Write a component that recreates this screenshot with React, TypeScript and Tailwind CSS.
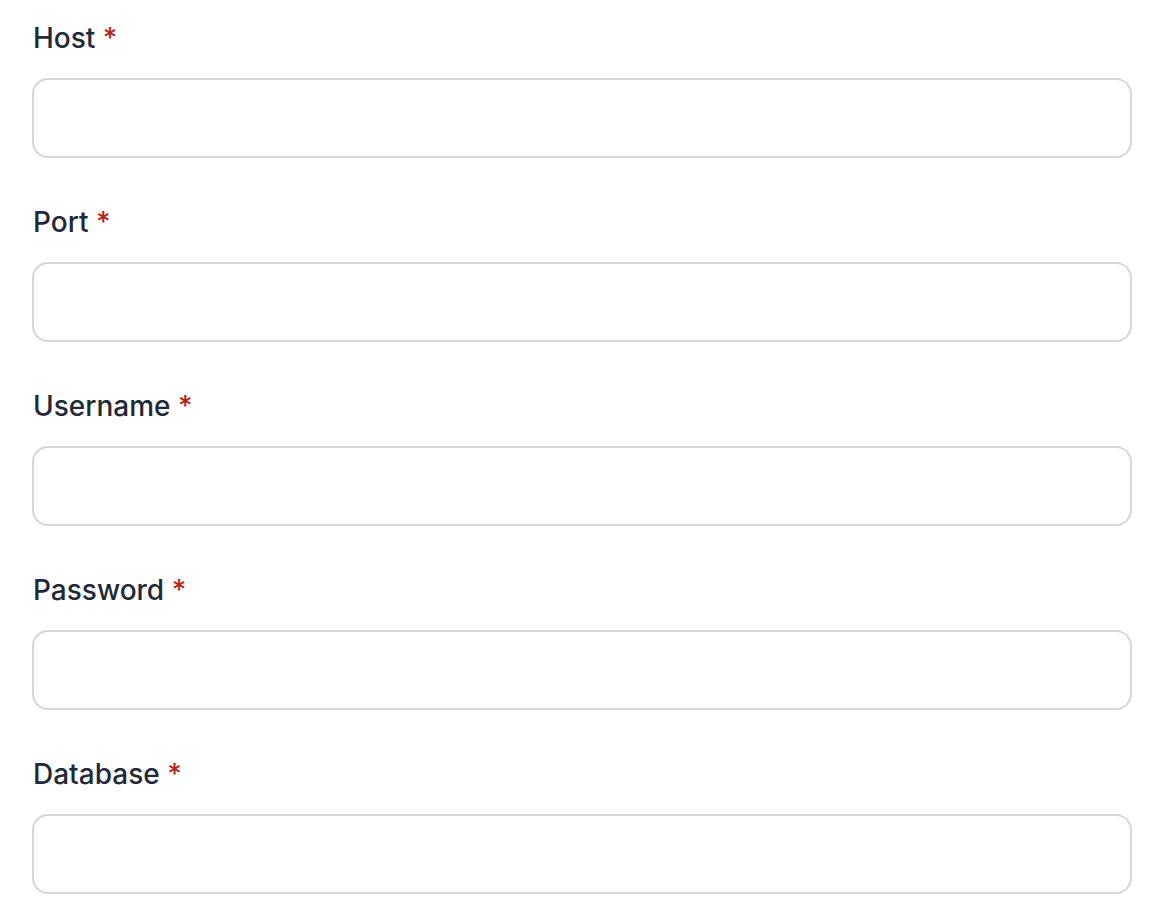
import React from "react";

const fields = ["Host", "Port", "Username", "Password", "Database"];

export default function App() {
  return (
    <div
      className="w-[1160px] h-[920px] bg-white pl-[32px] pr-[28px] pt-[18px]"
      style={{ fontFamily: "Inter, 'Noto Sans', sans-serif" }}
    >
      <div className="flex flex-col gap-[44px]">
        {fields.map((f) => (
          <div key={f} className="flex flex-col">
            <label className="text-[28px] leading-[40px] font-medium text-[#1f2937] pl-[1px]">
              {f} <span className="text-[#b42318]">*</span>
            </label>
            <div className="mt-[20px] h-[80px] w-[1100px] rounded-[16px] border-2 border-[#d4d6db] bg-white" />
          </div>
        ))}
      </div>
    </div>
  );
}
